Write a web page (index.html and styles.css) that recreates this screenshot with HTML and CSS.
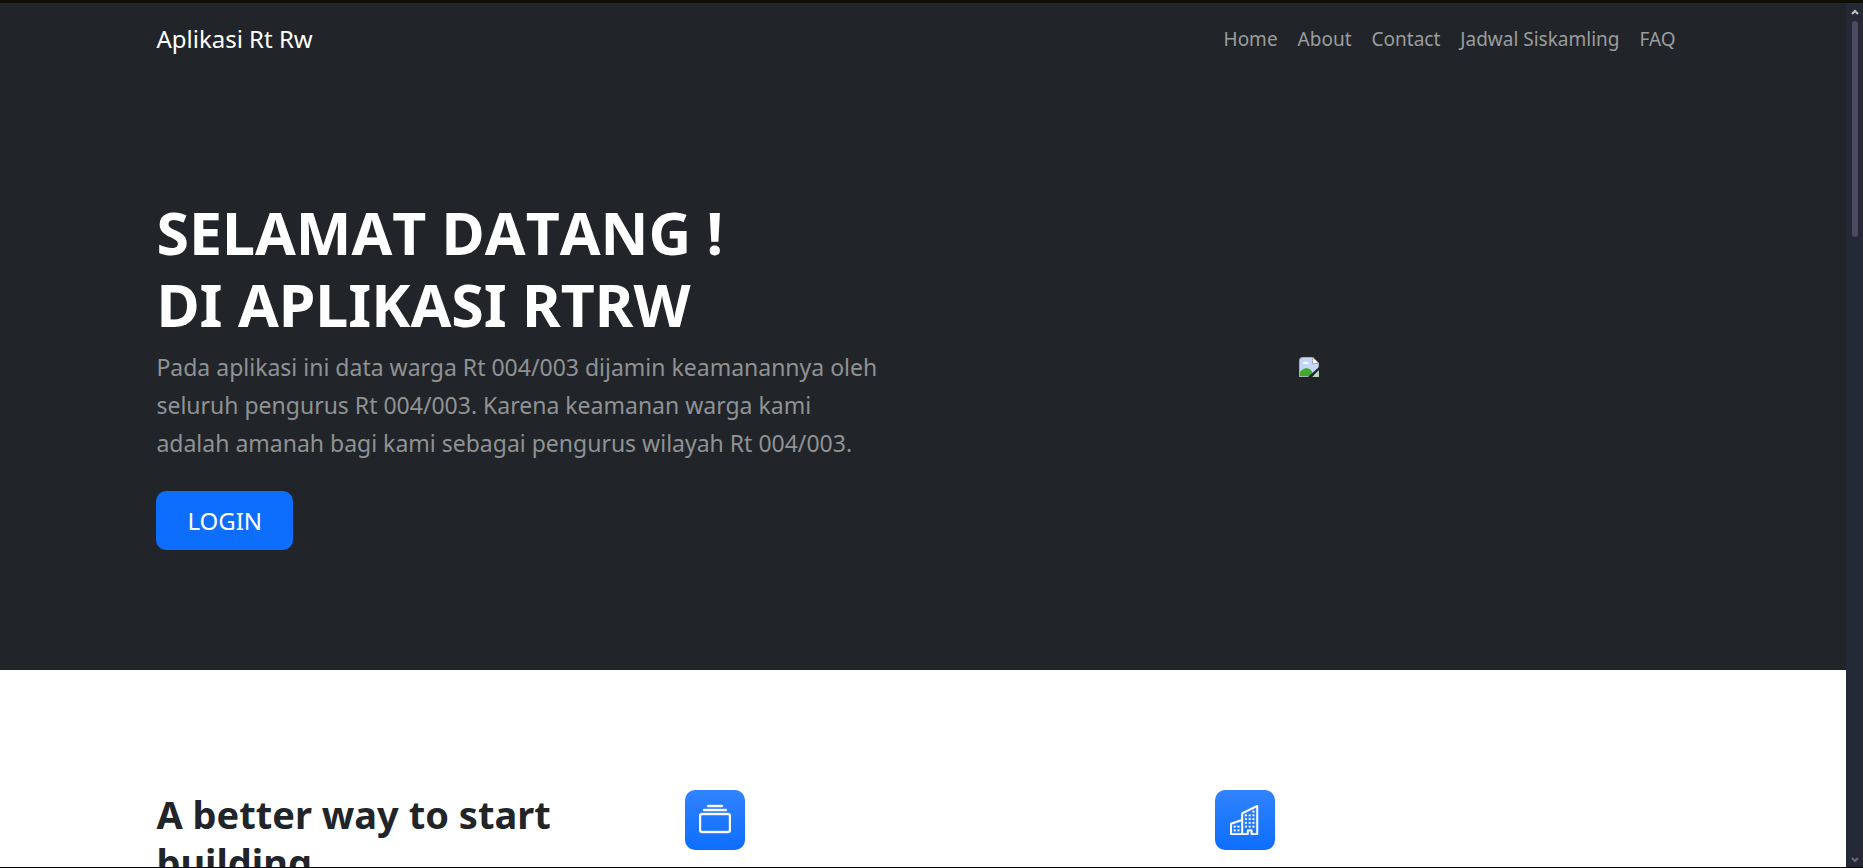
FILE: index.html
```
<!DOCTYPE html>
<html lang="id">
<head>
  <meta charset="UTF-8" />
  <meta name="viewport" content="width=device-width, initial-scale=1.0" />
  <title>Aplikasi Rt Rw</title>
  <link rel="stylesheet" href="styles.css">
</head>
<body>
  <div class="page">
    <!-- Navbar -->
    <nav class="navbar">
      <div class="container navbar-inner">
        <a class="brand" href="#">Aplikasi Rt Rw</a>
        <ul class="nav-links">
          <li><a href="#">Home</a></li>
          <li><a href="#">About</a></li>
          <li><a href="#">Contact</a></li>
          <li><a href="#">Jadwal Siskamling</a></li>
          <li><a href="#">FAQ</a></li>
        </ul>
      </div>
    </nav>

    <!-- Header -->
    <header class="hero">
      <div class="container hero-row">
        <div class="hero-text">
          <h1>SELAMAT DATANG !<br>DI APLIKASI RTRW</h1>
          <p>Pada aplikasi ini data warga Rt 004/003 dijamin keamanannya oleh seluruh pengurus Rt 004/003. Karena keamanan warga kami adalah amanah bagi kami sebagai pengurus wilayah Rt 004/003.</p>
          <a class="btn" href="#">LOGIN</a>
        </div>
        <div class="hero-image">
          <svg width="20" height="20" viewBox="0 0 20 20">
            <path d="M4 0h10l6 6v14H0V4a4 4 0 0 1 4-4z" fill="#a9adb3"/>
            <path d="M4 1h9v6h6v12H1V4a3 3 0 0 1 3-3z" fill="#c5d6f7"/>
            <path d="M14 1l5 5h-5z" fill="#fff"/>
            <path d="M4 7a2 2 0 0 1 2-2 2 2 0 0 1 3 1 1 1 0 0 1 1 1z" fill="#fff"/>
            <path d="M1 19v-4c3-4 7-5 11-2l3 6z" fill="#42a832"/>
            <path d="M9 20L20 10v3l-7 7z" fill="#212529"/>
            <path d="M14 20l6-6v6z" fill="#b5d5b0"/>
          </svg>
        </div>
      </div>
    </header>

    <!-- Features -->
    <section class="features">
      <div class="container features-row">
        <h2>A better way to start building.</h2>
        <div class="feature-icon">
          <svg width="32" height="32" viewBox="0 0 16 16" fill="currentColor" stroke="currentColor" stroke-width=".2">
            <path d="M2.5 3.5a.5.5 0 0 1 0-1h11a.5.5 0 0 1 0 1h-11zm2-2a.5.5 0 0 1 0-1h7a.5.5 0 0 1 0 1h-7zM0 13a1.500 1.500 0 0 0 1.500 1.500h13A1.500 1.500 0 0 0 16 13V6a1.500 1.500 0 0 0-1.500-1.500h-13A1.500 1.500 0 0 0 0 6v7zm1.500.5A.5.5 0 0 1 1 13V6a.5.5 0 0 1 .5-.5h13a.5.5 0 0 1 .5.5v7a.5.5 0 0 1-.5.5h-13z"/>
          </svg>
        </div>
        <div class="feature-icon">
          <svg width="30" height="30" viewBox="0 0 16 16" fill="currentColor" stroke="currentColor" stroke-width=".1">
            <path fill-rule="evenodd" d="M14.763.075A.5.5 0 0 1 15 .5v15a.5.5 0 0 1-.5.5h-3a.5.5 0 0 1-.5-.5V14h-1v1.500a.5.5 0 0 1-.5.5h-9a.5.5 0 0 1-.5-.5V10a.5.5 0 0 1 .342-.474L6 7.640V4.500a.5.5 0 0 1 .276-.447l8-4a.5.5 0 0 1 .487.022zM6 8.694 1 10.360V15h5V8.694zM7 15h2v-1.500a.5.5 0 0 1 .5-.5h2a.5.5 0 0 1 .5.5V15h2V1.309l-7 3.500V15z"/>
            <path d="M2 11h1v1H2v-1zm2 0h1v1H4v-1zm-2 2h1v1H2v-1zm2 0h1v1H4v-1zm4-4h1v1H8V9zm2 0h1v1h-1V9zm-2 2h1v1H8v-1zm2 0h1v1h-1v-1zm2-2h1v1h-1V9zm0 2h1v1h-1v-1zM8 7h1v1H8V7zm2 0h1v1h-1V7zm2 0h1v1h-1V7zM8 5h1v1H8V5zm2 0h1v1h-1V5zm2 0h1v1h-1V5zm0-2h1v1h-1V3z"/>
          </svg>
        </div>
      </div>
    </section>
  </div>

  <div class="scrollbar">
    <svg width="8" height="6" viewBox="0 0 8 6"><path d="M1 5l3-3 3 3" fill="none" stroke="#c4c4c4" stroke-width="2"/></svg>
    <div class="track"><div class="thumb"></div></div>
    <svg width="8" height="6" viewBox="0 0 8 6"><path d="M1 1l3 3 3-3" fill="none" stroke="#6b6b6b" stroke-width="2"/></svg>
  </div>
</body>
</html>
```
FILE: styles.css
```
* { box-sizing: border-box; }

body {
  margin: 0;
  height: 100vh;
  display: flex;
  overflow: hidden;
  border-top: 3px solid #0f0e04;
  border-bottom: 1px solid #000;
  font-family: "Segoe UI", "Noto Sans", sans-serif;
  font-size: 20px;
  line-height: 30px;
  color: #212529;
  background: #fff;
}

a { text-decoration: none; }

.page {
  flex: 1;
  overflow: hidden;
}

.container {
  width: 83%;
  max-width: 1530px;
  margin: 0 auto;
}

.navbar,
.hero {
  background: #212529;
  padding-right: 6px;
}

.navbar-inner {
  display: flex;
  align-items: center;
  justify-content: space-between;
  height: 72px;
}

.brand {
  color: #fff;
  font-size: 24px;
}

.nav-links {
  display: flex;
  gap: 20px;
  margin: 0;
  padding: 0 8px;
  list-style: none;
}

.nav-links a {
  color: #9b9d9e;
  font-size: 19px;
}

.hero {
  padding-top: 121px;
  padding-bottom: 120px;
}

.hero-row {
  display: grid;
  grid-template-columns: 1fr 1fr;
  gap: 30px;
  align-items: center;
}

.hero h1 {
  margin: 0 0 8px;
  color: #fff;
  font-size: 59px;
  font-weight: 700;
  font-kerning: none;
  line-height: 72px;
}

.hero p {
  max-width: 725px;
  margin: 0 0 29px;
  color: #909294;
  font-size: 23px;
  line-height: 38px;
}

.hero-image {
  display: flex;
  justify-content: center;
  padding-bottom: 12px;
}

.btn {
  display: inline-block;
  padding: 10px 31px;
  border-radius: 10px;
  background: #0d6efd;
  color: #fff;
  font-size: 24px;
  line-height: 39px;
}

.features {
  padding: 120px 6px 120px 0;
}

.features-row {
  display: grid;
  grid-template-columns: repeat(3, 1fr);
  gap: 60px;
  align-items: start;
}

.features h2 {
  margin: 0;
  font-size: 38px;
  font-weight: 700;
  line-height: 48px;
}

.feature-icon {
  display: flex;
  align-items: center;
  justify-content: center;
  width: 60px;
  height: 60px;
  border-radius: 10px;
  background: linear-gradient(#3183fd, #0d6efd);
  color: #fff;
}

.scrollbar {
  display: flex;
  flex-direction: column;
  align-items: center;
  gap: 6px;
  width: 17px;
  padding: 6px 0 4px;
  background: #242936;
}

.track {
  flex: 1;
}

.thumb {
  width: 6px;
  height: 26%;
  border-radius: 3px;
  background: #4a4b63;
}
```
